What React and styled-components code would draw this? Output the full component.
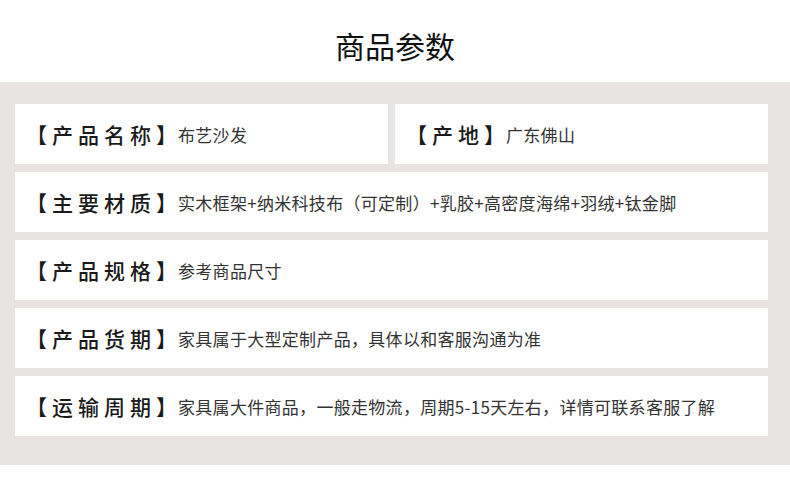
import React from 'react';
import styled, { createGlobalStyle } from 'styled-components';

const GlobalStyle = createGlobalStyle`
  html, body {
    margin: 0;
    padding: 0;
    background: #fff;
  }
  body {
    font-family: "Noto Sans CJK SC", "Noto Sans", sans-serif;
  }
`;

const Page = styled.div`
  width: 790px;
  height: 481px;
  background: #fff;
  overflow: hidden;
`;

const Header = styled.div`
  height: 82px;
  display: flex;
  align-items: center;
  justify-content: center;
  padding-top: 8px;
  box-sizing: border-box;
`;

const Title = styled.h1`
  margin: 0;
  font-size: 30px;
  font-weight: 400;
  color: #111;
  line-height: 1;
`;

const Panel = styled.div`
  background: #e8e4e3;
  padding: 22px 22px 29px 15px;
  display: flex;
  flex-direction: column;
  gap: 8px;
`;

const Row = styled.div`
  display: grid;
  grid-template-columns: ${({ $split }) => ($split ? '1fr 1fr' : '1fr')};
  gap: 7px;
`;

const Card = styled.div`
  background: #fff;
  height: 60px;
  display: flex;
  align-items: center;
  padding-left: 11px;
  white-space: nowrap;
`;

const Label = styled.span`
  font-size: 21px;
  font-weight: 500;
  letter-spacing: 5px;
  color: #1a1a1a;
  margin-right: -4px;
`;

const Value = styled.span`
  font-size: 17px;
  letter-spacing: 0.3px;
  color: #333;
`;

const Param = ({ label, value }) => (
  <Card>
    <Label>【{label}】</Label>
    <Value>{value}</Value>
  </Card>
);

const rows = [
  [
    { label: '产品名称', value: '布艺沙发' },
    { label: '产地', value: '广东佛山' },
  ],
  [{ label: '主要材质', value: '实木框架+纳米科技布（可定制）+乳胶+高密度海绵+羽绒+钛金脚' }],
  [{ label: '产品规格', value: '参考商品尺寸' }],
  [{ label: '产品货期', value: '家具属于大型定制产品，具体以和客服沟通为准' }],
  [{ label: '运输周期', value: '家具属大件商品，一般走物流，周期5-15天左右，详情可联系客服了解' }],
];

const App = () => (
  <Page>
    <GlobalStyle />
    <Header>
      <Title>商品参数</Title>
    </Header>
    <Panel>
      {rows.map((row, i) => (
        <Row key={i} $split={row.length > 1}>
          {row.map((p) => (
            <Param key={p.label} label={p.label} value={p.value} />
          ))}
        </Row>
      ))}
    </Panel>
  </Page>
);

export default App;
